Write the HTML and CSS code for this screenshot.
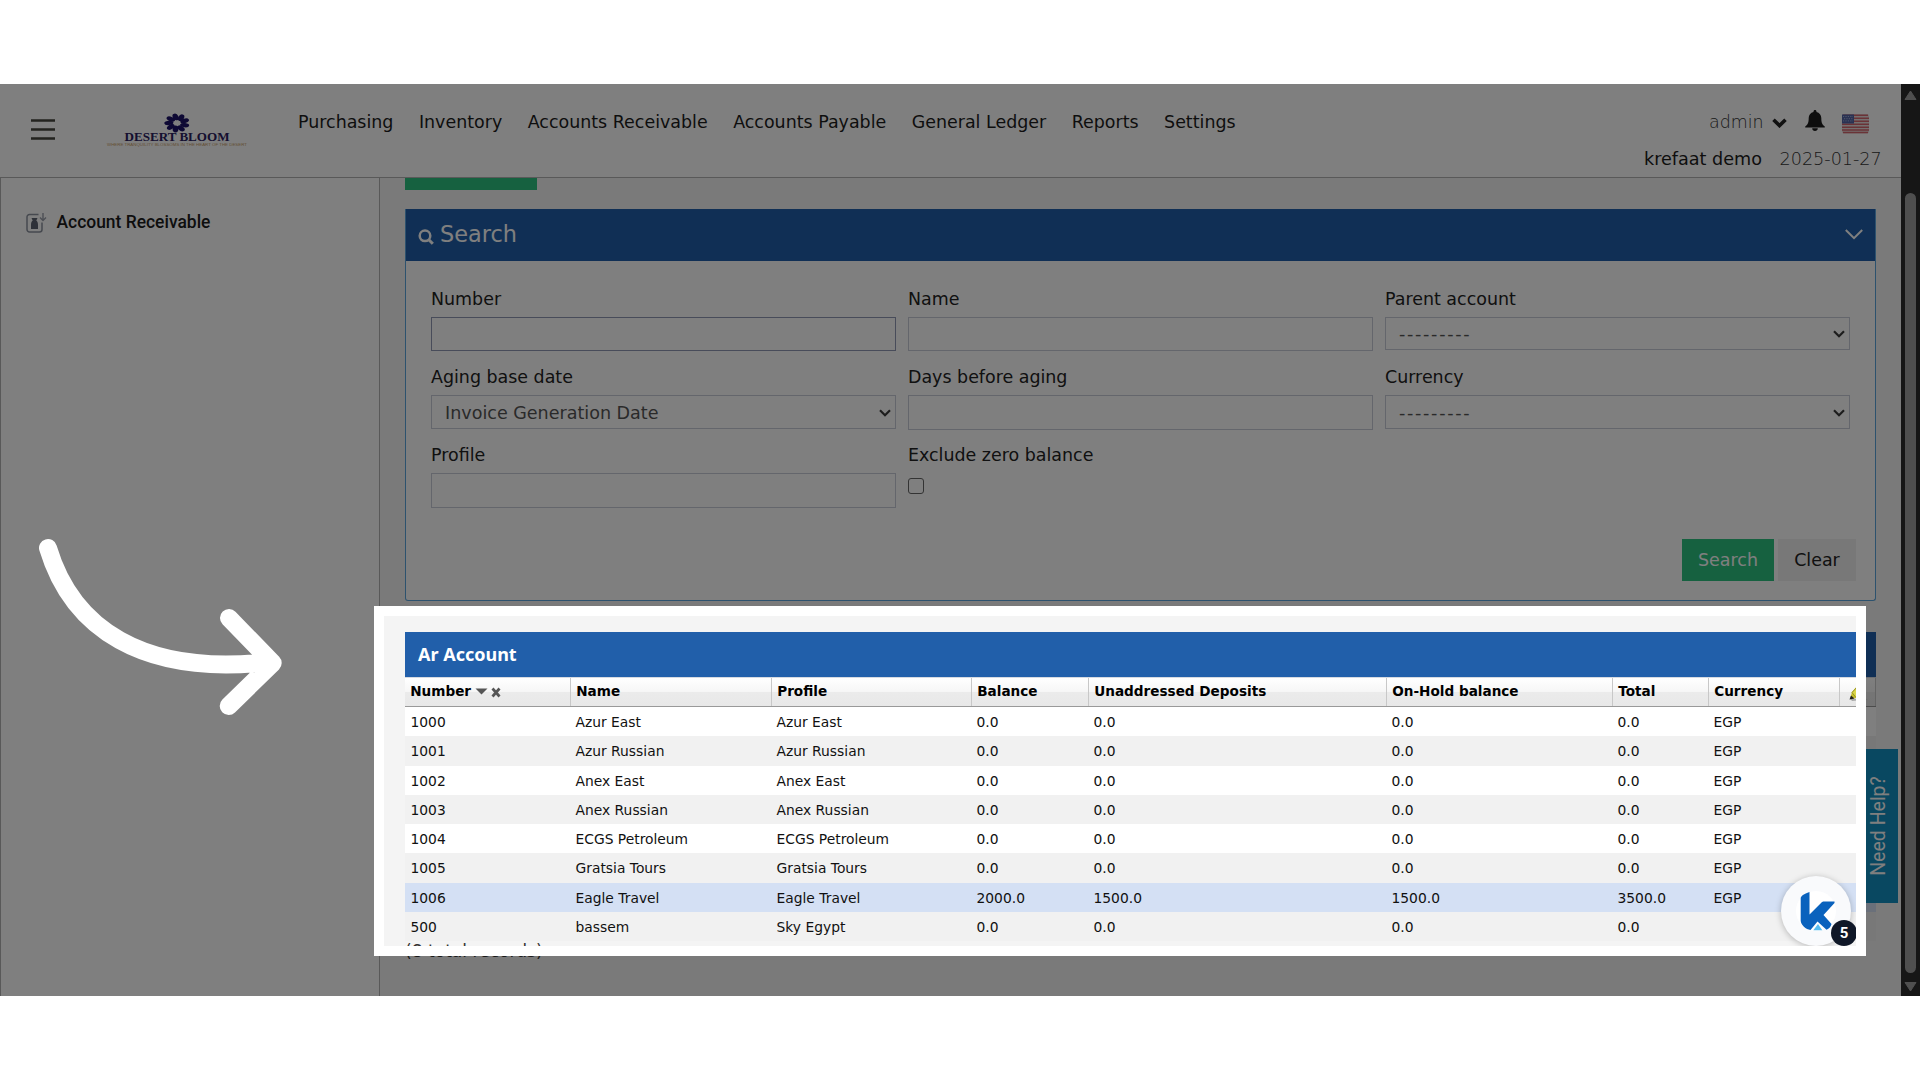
FILE: index.html
```
<!DOCTYPE html>
<html lang="en">
<head>
<meta charset="utf-8">
<title>Account Receivable</title>
<link rel="stylesheet" href="styles.css">
</head>
<body>
<div class="stage">
  <div class="app">
    <header class="topbar">
      <svg class="burger" width="24" height="22" viewBox="0 0 24 22"><path d="M0 1.500h24M0 10.500h24M0 19.500h24" stroke="#46463e" stroke-width="2.400"/></svg>
      <svg class="logo" width="142" height="44" viewBox="0 0 142 44">
        <g fill="#1d1369" transform="translate(71 15) scale(1 .75)">
          <ellipse cx="1.500" cy="-8" rx="2.900" ry="4.600" transform="rotate(20)"/><ellipse cx="1.500" cy="-8" rx="2.900" ry="4.600" transform="rotate(60)"/>
          <ellipse cx="1.500" cy="-8" rx="2.900" ry="4.600" transform="rotate(100)"/><ellipse cx="1.500" cy="-8" rx="2.900" ry="4.600" transform="rotate(140)"/>
          <ellipse cx="1.500" cy="-8" rx="2.900" ry="4.600" transform="rotate(180)"/><ellipse cx="1.500" cy="-8" rx="2.900" ry="4.600" transform="rotate(220)"/>
          <ellipse cx="1.500" cy="-8" rx="2.900" ry="4.600" transform="rotate(260)"/><ellipse cx="1.500" cy="-8" rx="2.900" ry="4.600" transform="rotate(300)"/>
          <ellipse cx="1.500" cy="-8" rx="2.900" ry="4.600" transform="rotate(340)"/>
        </g>
        <text class="logo-name" x="18.500" y="33.300" textLength="105" lengthAdjust="spacingAndGlyphs">DESERT BLOOM</text>
        <text class="logo-tag" x="1" y="38" textLength="140" lengthAdjust="spacingAndGlyphs">WHERE TRANQUILITY BLOSSOMS IN THE HEART OF THE DESERT</text>
      </svg>
      <nav class="nav">
        <a>Purchasing</a><a>Inventory</a><a>Accounts Receivable</a><a>Accounts Payable</a><a>General Ledger</a><a>Reports</a><a>Settings</a>
      </nav>
      <div class="user">
        <div class="user-row user-top">
          <span class="thin admin">admin</span>
          <svg class="caret" width="15" height="10" viewBox="0 0 15 10"><path d="M1.500 1.800L7.500 7.600L13.500 1.800" fill="none" stroke="#222" stroke-width="3.600"/></svg>
          <svg class="bell" width="20" height="22" viewBox="0 0 20 22"><path d="M10 0c.9 0 1.500.6 1.500 1.500v.4c3 .7 4.800 3 4.800 6.100 0 4.500.9 6.800 3.500 8.400v1H.2v-1C2.800 14.800 3.700 12.500 3.700 8c0-3.100 1.800-5.400 4.800-6.100v-.4C8.500.6 9.100 0 10 0zM7.200 18.300h5.600c0 1.700-1.200 2.800-2.800 2.800s-2.800-1.100-2.800-2.800z" fill="#1d1d1d"/></svg>
          <svg class="flag" width="27" height="20" viewBox="0 0 27 20"><rect width="27" height="19.500" rx="2" fill="#e9dede"/><path d="M1 1.300h25M0 4.300h27M0 7.300h27M0 10.300h27M0 13.300h27M0 16h27M1 18.500h25" stroke="#d4666e" stroke-width="1.400"/><rect y=".5" width="12" height="9" fill="#5565a6"/><path d="M1 2.500h10M2 4.700h9M1 6.900h10" stroke="#a9b4da" stroke-width=".9" stroke-dasharray="1.200 1.200"/></svg>
        </div>
        <div class="user-row user-bottom"><span class="company">krefaat demo</span><span class="thin date">2025-01-27</span></div>
      </div>
    </header>
    <div class="body">
      <aside class="sidebar">
        <svg width="21" height="20" viewBox="0 0 21 20"><path d="M12.500 1.500H3.500a2.500 2.500 0 0 0-2.500 2.500v12.500a2.500 2.500 0 0 0 2.500 2.500h10a2.500 2.500 0 0 0 2.500-2.500V9.500" fill="none" stroke="#8c929e" stroke-width="1.500"/><path d="M17 0v7M14 4.500l3 3 3-3" fill="none" stroke="#9a9faa" stroke-width="1.400"/><path d="M5.500 5h6l-1.200 2.500c1.200 1 1.700 2.300 1.700 4.500v4H5v-4c0-2.200.5-3.500 1.700-4.500z" fill="#5d6370"/></svg>
        <span>Account Receivable</span>
      </aside>
      <main class="main">
        <div class="action"></div>
        <section class="panel">
          <div class="panel-head">
            <svg width="17" height="16" viewBox="0 0 17 16"><circle cx="7" cy="6.800" r="5.300" fill="none" stroke="#fff" stroke-width="2.500"/><path d="M10.800 10.800l4 4" stroke="#fff" stroke-width="3"/></svg>
            <span>Search</span>
            <svg class="fold" width="18" height="11" viewBox="0 0 18 11"><path d="M.8 1l8.200 8.200L17.200 1" fill="none" stroke="#fff" stroke-width="2"/></svg>
          </div>
          <div class="form">
            <div class="field"><label>Number</label><div class="box focus"></div></div>
            <div class="field"><label>Name</label><div class="box"></div></div>
            <div class="field"><label>Parent account</label><div class="box select"><span class="dashes">---------</span><svg width="12" height="8" viewBox="0 0 12 8"><path d="M1 1.200l5 5 5-5" fill="none" stroke="#3a3a3a" stroke-width="2.200"/></svg></div></div>
            <div class="field"><label>Aging base date</label><div class="box select tall"><span>Invoice Generation Date</span><svg width="12" height="8" viewBox="0 0 12 8"><path d="M1 1.200l5 5 5-5" fill="none" stroke="#3a3a3a" stroke-width="2.200"/></svg></div></div>
            <div class="field"><label>Days before aging</label><div class="box tall"></div></div>
            <div class="field"><label>Currency</label><div class="box select tall"><span class="dashes">---------</span><svg width="12" height="8" viewBox="0 0 12 8"><path d="M1 1.200l5 5 5-5" fill="none" stroke="#3a3a3a" stroke-width="2.200"/></svg></div></div>
            <div class="field"><label>Profile</label><div class="box tall"></div></div>
            <div class="field"><label>Exclude zero balance</label><div class="check"></div></div>
          </div>
          <div class="buttons"><span class="btn primary">Search</span><span class="btn plain">Clear</span></div>
        </section>
        <section class="list">
          <h2>Ar Account</h2>
          <div class="row head"><span>Number<svg class="sort" width="27" height="12" viewBox="0 0 27 12"><path d="M.5 2.500h12L6.500 8.500z" fill="#555"/><path d="M17.500 2.500l7 8M24.500 2.500l-7 8" stroke="#555" stroke-width="2.700"/></svg></span><span>Name</span><span>Profile</span><span>Balance</span><span>Unaddressed Deposits</span><span>On-Hold balance</span><span>Total</span><span>Currency</span><span class="edit"><svg width="20" height="18" viewBox="0 0 20 18"><path d="M1 13.500L19 14.500l-16 1.500z" fill="#aaa"/><path d="M1 14L3 7 9 0l7 5-9 8z" fill="#c9c12f"/><path d="M3 7.500l4 5L16 4 10 0z" fill="#dcd74a" stroke="#8e8a22" stroke-width=".9"/><path d="M.5 14.500l1.500-4 3.500 3z" fill="#222"/></svg></span></div>
          <div class="row"><span>1000</span><span>Azur East</span><span>Azur East</span><span>0.0</span><span>0.0</span><span>0.0</span><span>0.0</span><span>EGP</span><span></span></div>
          <div class="row alt"><span>1001</span><span>Azur Russian</span><span>Azur Russian</span><span>0.0</span><span>0.0</span><span>0.0</span><span>0.0</span><span>EGP</span><span></span></div>
          <div class="row"><span>1002</span><span>Anex East</span><span>Anex East</span><span>0.0</span><span>0.0</span><span>0.0</span><span>0.0</span><span>EGP</span><span></span></div>
          <div class="row alt"><span>1003</span><span>Anex Russian</span><span>Anex Russian</span><span>0.0</span><span>0.0</span><span>0.0</span><span>0.0</span><span>EGP</span><span></span></div>
          <div class="row"><span>1004</span><span>ECGS Petroleum</span><span>ECGS Petroleum</span><span>0.0</span><span>0.0</span><span>0.0</span><span>0.0</span><span>EGP</span><span></span></div>
          <div class="row alt"><span>1005</span><span>Gratsia Tours</span><span>Gratsia Tours</span><span>0.0</span><span>0.0</span><span>0.0</span><span>0.0</span><span>EGP</span><span></span></div>
          <div class="row hover"><span>1006</span><span>Eagle Travel</span><span>Eagle Travel</span><span>2000.0</span><span>1500.0</span><span>1500.0</span><span>3500.0</span><span>EGP</span><span></span></div>
          <div class="row alt"><span>500</span><span>bassem</span><span>Sky Egypt</span><span>0.0</span><span>0.0</span><span>0.0</span><span>0.0</span><span></span><span></span></div>
          <p class="total">(8 total records)</p>
        </section>
      </main>
    </div>
  </div>
  <div class="scrollbar">
    <svg width="13" height="11" viewBox="0 0 13 11"><path d="M6.500 1L12 9.500H1z" fill="#9f9f9f" stroke="#9f9f9f" stroke-linejoin="round"/></svg>
    <div class="thumb"></div>
    <svg class="down" width="13" height="11" viewBox="0 0 13 11"><path d="M6.500 10L12 1.500H1z" fill="#9f9f9f" stroke="#9f9f9f" stroke-linejoin="round"/></svg>
  </div>
  <div class="help"><span>Need Help?</span></div>
  <div class="widget">
    <svg width="70" height="70" viewBox="0 0 70 70"><circle cx="35" cy="35" r="20" fill="#fff"/><path d="M19.700 22.500c0-2.500 3.300-4.800 8.800-6.500V38.500L40.500 26.500c.8-.8 1.500-1 2.500-1h10.500v1.500L42.500 39l8 9c-.5 2.500-2.500 4.800-5 5.800L36.500 45.500 29.500 54c-4.500-.6-9.800-5-9.800-9.500z" fill="#0a62bd"/><path d="M37 48l4.300 6.300h-9z" fill="#56bdf0"/></svg>
    <span class="count">5</span>
  </div>
  <div class="spotlight"></div>
  <svg class="arrow" width="260" height="190" viewBox="30 530 260 190"><path d="M48 548C72 628 142 676 268 662M229 618L272.700 663L228.700 706" fill="none" stroke="#fff" stroke-width="18" stroke-linecap="round" stroke-linejoin="round"/></svg>
</div>
</body>
</html>
```

FILE: styles.css
```
* { box-sizing: border-box; }
body { margin: 0; padding-top: 84px; height: 1080px; background: #fff; overflow: hidden; font-family: "DejaVu Sans", sans-serif; font-size: 17.450px; color: #222; }
.stage { position: relative; width: 1920px; height: 912px; overflow: hidden; display: flex; }
.app { width: 1901px; height: 912px; display: flex; flex-direction: column; }
.topbar { height: 94px; flex: none; background: #fff; border-bottom: 1px solid #b2b2b2; display: flex; align-items: flex-start; color: #1c1c1c; }
.burger { margin: 35px 0 0 31px; }
.logo { margin: 24px 0 0 51px; overflow: visible; }
.logo-name { font: bold 11.500px "Liberation Serif", serif; fill: #2a2060; }
.logo-tag { font: 4.200px "Liberation Sans", sans-serif; fill: #c9a06a; }
.nav { margin: 26px 0 0 50px; display: flex; gap: 25.500px; line-height: 24px; white-space: nowrap; }
.user { margin-left: auto; width: 260px; }
.user-row { display: flex; line-height: 24px; }
.user-top { padding: 26px 0 0 68px; height: 50px; }
.admin { width: 53px; }
.caret { margin: 8px 0 0 10px; }
.bell { margin: 0 0 0 18px; }
.flag { margin: 4px 0 0 17px; }
.user-bottom { margin-top: 13px; padding-left: 3px; gap: 17.500px; font-size: 17.600px; }
.thin { font-family: "DejaVu Sans", "DejaVu Sans Light", sans-serif; font-weight: 200; color: #333; }
.body { flex: 1; display: flex; min-height: 0; }
.sidebar { width: 380px; flex: none; background: #fff; border-left: 1px solid #b2b2b2; border-right: 1px solid #b2b2b2; padding: 34px 0 0 25px; display: flex; gap: 9.500px; align-items: flex-start; font: 500 17.450px/20px Roboto, sans-serif; color: #1c1c1c; }
.sidebar svg { margin-top: 1px; }
.main { width: 1521px; background: #f4f4f4; padding: 0 25px; overflow: hidden; }
.action { width: 132px; height: 12px; background: #2cc280; }
.panel { margin-top: 19px; height: 392px; border: 1px solid #5aa5dc; border-top: 0; border-radius: 0 0 3px 3px; background: #fff; }
.panel-head { height: 52px; background: #205faa; color: #fff; display: flex; align-items: flex-start; font-size: 22.400px; line-height: 30px; padding: 10px 12px 0 12px; }
.panel-head svg { margin-top: 10px; }
.panel-head span { margin-left: 5px; }
.panel-head .fold { margin: 10px 0 0 auto; }
.form { padding: 24px 25px 0; display: grid; grid-template-columns: repeat(3, 465px); column-gap: 12px; grid-auto-rows: 78px; }
.field label { display: block; height: 32px; line-height: 28px; }
.box { height: 34px; border: 1px solid #c8ccd8; }
.focus { border-color: #9198b4; }
.tall { height: 35px; }
.select { height: 33px; display: flex; align-items: center; justify-content: space-between; padding: 1px 4px 0 13px; color: #555; }
.select span { font-size: 17.550px; }
.select.tall { height: 34px; }
.select .dashes { letter-spacing: 1.700px; }
.check { width: 16px; height: 16px; margin-top: 5px; border: 1.500px solid #666; border-radius: 3px; }
.buttons { display: flex; justify-content: flex-end; gap: 4px; padding: 20px 19px 0 0; line-height: 42px; text-align: center; }
.btn { height: 42px; }
.primary { width: 92px; background: #2cc280; color: #fff; }
.plain { width: 78px; background: #f0f0f0; }
.list { margin-top: 31px; color: #111; }
.list h2 { margin: 0; height: 45px; background: #215faa; color: #fff; font: bold 18px/45px "Noto Sans", sans-serif; padding-left: 13px; }
.row { display: grid; grid-template-columns: 166px 201px 200px 117px 298px 226px 96px 131px 36px; height: 29.250px; line-height: 30px; font-size: 13.850px; background: #fff; }
.row span { padding-left: 4.500px; white-space: nowrap; overflow: hidden; }
.row span:first-child { padding-left: 5.500px; }
.row.head { height: 30px; line-height: 27px; font-size: 13.600px; font-weight: bold; color: #000; background: linear-gradient(#fff, #f6f6f6 50%, #ebebeb 51%, #e8e8e8); border-bottom: 1px solid #999; border-top: 1px solid #d5dae2; }
.row.head span { border-right: 1px solid #c8c8c8; padding-left: 5.200px; }
.row.head .edit { padding: 7px 0 0 9px; line-height: 0; }
.sort { margin-left: 4px; vertical-align: -2px; }
.row.alt { background: #f1f1f1; }
.row.hover { background: #d4e0f4; }
.total { margin: 0; line-height: 20px; font-size: 17.100px; color: #333; }
.scrollbar { width: 19px; background: #2c2c2c; display: flex; flex-direction: column; align-items: center; padding-top: 6px; }
.thumb { flex: none; width: 11px; height: 780px; border-radius: 6px; background: #9f9f9f; margin-top: 92px; }
.down { margin-top: 8px; }
.help { position: absolute; left: 1860px; top: 665px; width: 38px; height: 154px; background: #1390c2; color: #fff; display: flex; align-items: center; justify-content: center; font: 19.500px/36px Roboto, sans-serif; }
.help span { transform: rotate(-90deg); white-space: nowrap; }
.widget { position: absolute; left: 1781px; top: 792px; width: 70px; height: 70px; border-radius: 50%; background: #f9fafc; box-shadow: 0 1px 6px rgba(0,0,0,.25); }
.count { position: absolute; left: 50px; top: 44px; width: 26px; height: 26px; border-radius: 50%; background: #101828; color: #fff; font: bold 15px/27px Roboto, sans-serif; text-align: center; }
.spotlight { position: absolute; left: 374px; top: 522px; width: 1492px; height: 350px; border: 10px solid #fff; box-shadow: 0 0 0 2000px rgba(0,0,0,.5); }
.arrow { position: absolute; left: 30px; top: 446px; }
```
